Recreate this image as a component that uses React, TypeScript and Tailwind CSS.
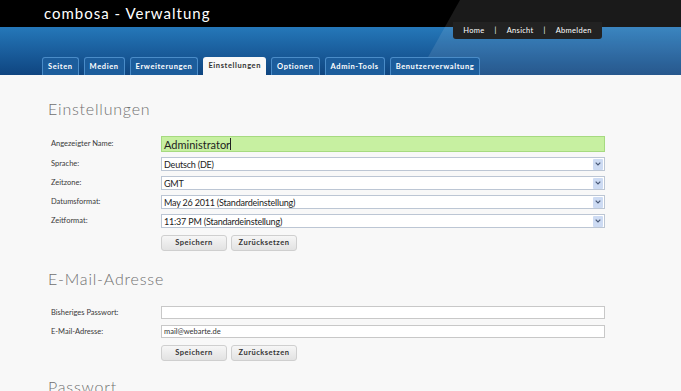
import { ReactNode } from 'react'

const tabs = ['Seiten', 'Medien', 'Erweiterungen', 'Einstellungen', 'Optionen', 'Admin-Tools', 'Benutzerverwaltung']

function Chevron() {
  return (
    <span className="flex h-[11px] w-[10px] items-center justify-center rounded-[1px] bg-[#cddbf3]">
      <svg width="6" height="4" viewBox="0 0 6 4">
        <path d="M0.7 0.7 L3 3 L5.3 0.7" fill="none" stroke="#4a5a78" strokeWidth="1.2" />
      </svg>
    </span>
  )
}

function Row({ label, children }: { label: string; children: ReactNode }) {
  return (
    <div className="flex items-center">
      <span className="w-[110px] text-[7.5px] text-[#3a3a3a]">{label}</span>
      {children}
    </div>
  )
}

function SelectBox({ value }: { value: string }) {
  return (
    <div className="flex h-[14px] w-[444px] items-center justify-between border border-[#bcc6d4] bg-white pl-[2px] pr-[1px]">
      <span className="text-[9px] leading-none tracking-[-0.2px] text-[#222]">{value}</span>
      <Chevron />
    </div>
  )
}

function TextBox({ value }: { value?: string }) {
  return (
    <div className="flex h-[13px] w-[444px] items-center border border-[#c8c8c8] bg-white pl-[2px]">
      <span className="text-[7.5px] leading-none text-[#333]">{value}</span>
    </div>
  )
}

function Buttons() {
  return (
    <div className="flex gap-[4px] pl-[110px]">
      {['Speichern', 'Zurücksetzen'].map((b) => (
        <button
          key={b}
          type="button"
          className="flex h-[16px] w-[66px] items-center justify-center rounded-[3px] border border-[#cfcfcf] bg-gradient-to-b from-[#f6f6f6] to-[#e2e2e2] text-[7.5px] font-bold tracking-[0.5px] text-[#333]"
        >
          {b}
        </button>
      ))}
    </div>
  )
}

function Heading({ children }: { children: ReactNode }) {
  return <h2 className="h-[20px] text-[16px] font-light leading-[20px] tracking-[0.8px] text-[#707070]">{children}</h2>
}

export default function App() {
  return (
    <div className="h-[391px] w-[681px] overflow-hidden bg-[#f8f8f8]" style={{ fontFamily: 'Lato, "Noto Sans", sans-serif' }}>
      <header className="relative">
        <div className="flex h-[27px] items-center bg-black pl-[44px]">
          <span className="text-[15px] leading-none tracking-[1px] text-white">combosa - Verwaltung</span>
        </div>
        <div className="flex h-[48px] items-end gap-[5px] bg-gradient-to-b from-[#2578b9] via-[#1a5e9d] to-[#0f4580] pl-[42px]">
          {tabs.map((t) =>
            t === 'Einstellungen' ? (
              <span
                key={t}
                className="relative z-10 flex h-[18px] items-center rounded-t-[3px] bg-[#f8f8f8] px-[5px] text-[7.5px] font-bold tracking-[0.6px] text-[#333]"
              >
                {t}
              </span>
            ) : (
              <span
                key={t}
                className="relative z-10 flex h-[18px] items-center rounded-t-[3px] border border-b-0 border-[#4a8cc8] bg-[#1c5d9c] px-[5px] text-[7.5px] font-bold tracking-[0.6px] text-white"
              >
                {t}
              </span>
            ),
          )}
        </div>
        <svg className="pointer-events-none absolute left-0 top-0" width="681" height="75">
          <polygon points="460,0 681,0 681,75 418,75" fill="#ffffff" fillOpacity="0.1" />
        </svg>
        <nav className="absolute left-[453px] top-[22px] flex h-[17px] w-[149px] items-center justify-center gap-[10px] rounded-b-[3px] bg-[#222] text-[7.5px] tracking-[0.3px] text-white">
          <span>Home</span>
          <span>|</span>
          <span>Ansicht</span>
          <span>|</span>
          <span>Abmelden</span>
        </nav>
      </header>

      <main className="pl-[48px] pt-[24px]">
        <Heading>Einstellungen</Heading>
        <div className="mt-[17px] flex flex-col gap-[5px] pl-[3px]">
          <Row label="Angezeigter Name:">
            <div className="flex h-[16px] w-[444px] items-center border border-[#a6da80] bg-[#c7f0a1] pl-[2px]">
              <span className="text-[11px] leading-none text-[#1e1e1e]">Administrator</span>
              <span className="h-[12px] border-l border-[#222]" />
            </div>
          </Row>
          <Row label="Sprache:">
            <SelectBox value="Deutsch (DE)" />
          </Row>
          <Row label="Zeitzone:">
            <SelectBox value="GMT" />
          </Row>
          <Row label="Datumsformat:">
            <SelectBox value="May 26 2011 (Standardeinstellung)" />
          </Row>
          <Row label="Zeitformat:">
            <SelectBox value="11:37 PM (Standardeinstellung)" />
          </Row>
        </div>
        <div className="mt-[7px] pl-[3px]">
          <Buttons />
        </div>

        <div className="mt-[18px]">
          <Heading>E-Mail-Adresse</Heading>
        </div>
        <div className="mt-[17px] flex flex-col gap-[6px] pl-[3px]">
          <Row label="Bisheriges Passwort:">
            <TextBox />
          </Row>
          <Row label="E-Mail-Adresse:">
            <TextBox value="mail@webarte.de" />
          </Row>
        </div>
        <div className="mt-[7px] pl-[3px]">
          <Buttons />
        </div>

        <div className="mt-[16px]">
          <Heading>Passwort</Heading>
        </div>
      </main>
    </div>
  )
}
